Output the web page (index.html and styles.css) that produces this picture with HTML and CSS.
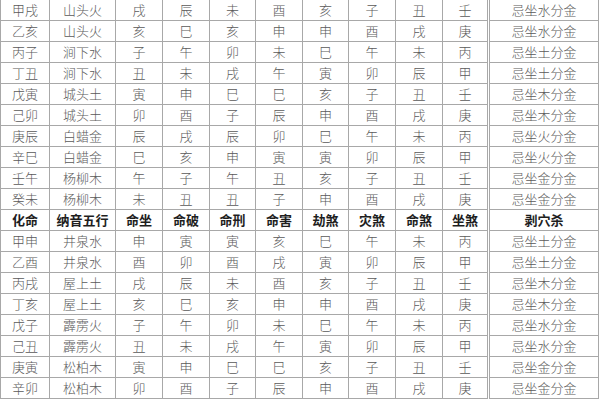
FILE: index.html
```html
<!DOCTYPE html>
<html lang="zh">
<head>
<meta charset="utf-8">
<link rel="stylesheet" href="styles.css">
</head>
<body>
<table class="grid">
<colgroup>
<col class="c-a"><col class="c-b"><col class="c-n"><col class="c-n"><col class="c-m"><col class="c-n"><col class="c-m"><col class="c-n"><col class="c-n"><col class="c-m"><col class="c-z">
</colgroup>
<tbody>
<tr><td>甲戌</td><td>山头火</td><td>戌</td><td>辰</td><td>未</td><td>酉</td><td>亥</td><td>子</td><td>丑</td><td>壬</td><td class="last">忌坐水分金</td></tr>
<tr><td>乙亥</td><td>山头火</td><td>亥</td><td>巳</td><td>亥</td><td>申</td><td>申</td><td>酉</td><td>戌</td><td>庚</td><td class="last">忌坐水分金</td></tr>
<tr><td>丙子</td><td>涧下水</td><td>子</td><td>午</td><td>卯</td><td>未</td><td>巳</td><td>午</td><td>未</td><td>丙</td><td class="last">忌坐土分金</td></tr>
<tr><td>丁丑</td><td>涧下水</td><td>丑</td><td>未</td><td>戌</td><td>午</td><td>寅</td><td>卯</td><td>辰</td><td>甲</td><td class="last">忌坐土分金</td></tr>
<tr><td>戊寅</td><td>城头土</td><td>寅</td><td>申</td><td>巳</td><td>巳</td><td>亥</td><td>子</td><td>丑</td><td>壬</td><td class="last">忌坐木分金</td></tr>
<tr><td>己卯</td><td>城头土</td><td>卯</td><td>酉</td><td>子</td><td>辰</td><td>申</td><td>酉</td><td>戌</td><td>庚</td><td class="last">忌坐木分金</td></tr>
<tr><td>庚辰</td><td>白蜡金</td><td>辰</td><td>戌</td><td>辰</td><td>卯</td><td>巳</td><td>午</td><td>未</td><td>丙</td><td class="last">忌坐火分金</td></tr>
<tr><td>辛巳</td><td>白蜡金</td><td>巳</td><td>亥</td><td>申</td><td>寅</td><td>寅</td><td>卯</td><td>辰</td><td>甲</td><td class="last">忌坐火分金</td></tr>
<tr><td>壬午</td><td>杨柳木</td><td>午</td><td>子</td><td>午</td><td>丑</td><td>亥</td><td>子</td><td>丑</td><td>壬</td><td class="last">忌坐金分金</td></tr>
<tr><td>癸未</td><td>杨柳木</td><td>未</td><td>丑</td><td>丑</td><td>子</td><td>申</td><td>酉</td><td>戌</td><td>庚</td><td class="last">忌坐金分金</td></tr>
<tr class="head"><td>化命</td><td>纳音五行</td><td>命坐</td><td>命破</td><td>命刑</td><td>命害</td><td>劫煞</td><td>灾煞</td><td>命煞</td><td>坐煞</td><td class="last">剥穴杀</td></tr>
<tr><td>甲申</td><td>井泉水</td><td>申</td><td>寅</td><td>寅</td><td>亥</td><td>巳</td><td>午</td><td>未</td><td>丙</td><td class="last">忌坐土分金</td></tr>
<tr><td>乙酉</td><td>井泉水</td><td>酉</td><td>卯</td><td>酉</td><td>戌</td><td>寅</td><td>卯</td><td>辰</td><td>甲</td><td class="last">忌坐土分金</td></tr>
<tr><td>丙戌</td><td>屋上土</td><td>戌</td><td>辰</td><td>未</td><td>酉</td><td>亥</td><td>子</td><td>丑</td><td>壬</td><td class="last">忌坐木分金</td></tr>
<tr><td>丁亥</td><td>屋上土</td><td>亥</td><td>巳</td><td>亥</td><td>申</td><td>申</td><td>酉</td><td>戌</td><td>庚</td><td class="last">忌坐木分金</td></tr>
<tr><td>戊子</td><td>霹雳火</td><td>子</td><td>午</td><td>卯</td><td>未</td><td>巳</td><td>午</td><td>未</td><td>丙</td><td class="last">忌坐水分金</td></tr>
<tr><td>己丑</td><td>霹雳火</td><td>丑</td><td>未</td><td>戌</td><td>午</td><td>寅</td><td>卯</td><td>辰</td><td>甲</td><td class="last">忌坐水分金</td></tr>
<tr><td>庚寅</td><td>松柏木</td><td>寅</td><td>申</td><td>巳</td><td>巳</td><td>亥</td><td>子</td><td>丑</td><td>壬</td><td class="last">忌坐金分金</td></tr>
<tr><td>辛卯</td><td>松柏木</td><td>卯</td><td>酉</td><td>子</td><td>辰</td><td>申</td><td>酉</td><td>戌</td><td>庚</td><td class="last">忌坐金分金</td></tr>
</tbody>
</table>
</body>
</html>
```
FILE: styles.css
```css
html, body {
  margin: 0;
  padding: 0;
  background: #ffffff;
}

body {
  padding: 0 2px 0 0;
  font-family: "Noto Sans CJK SC", "Noto Sans", sans-serif;
}

.grid {
  border-collapse: collapse;
  table-layout: fixed;
  width: 598px;
  margin-top: -1px;
}

.c-a { width: 49px; }
.c-b { width: 66px; }
.c-n { width: 47px; }
.c-m { width: 46px; }
.c-z { width: 110px; }

.grid td {
  height: 20px;
  padding: 0;
  border: 1px solid #a8a8a8;
  text-align: center;
  vertical-align: middle;
  font-size: 13px;
  line-height: 20px;
  font-weight: 300;
  color: #5a5a5a;
  white-space: nowrap;
  overflow: hidden;
}

.grid td.last {
  border-left: 3px double #a8a8a8;
}

.grid .head td {
  font-weight: 700;
  color: #1e1e1e;
}
```
